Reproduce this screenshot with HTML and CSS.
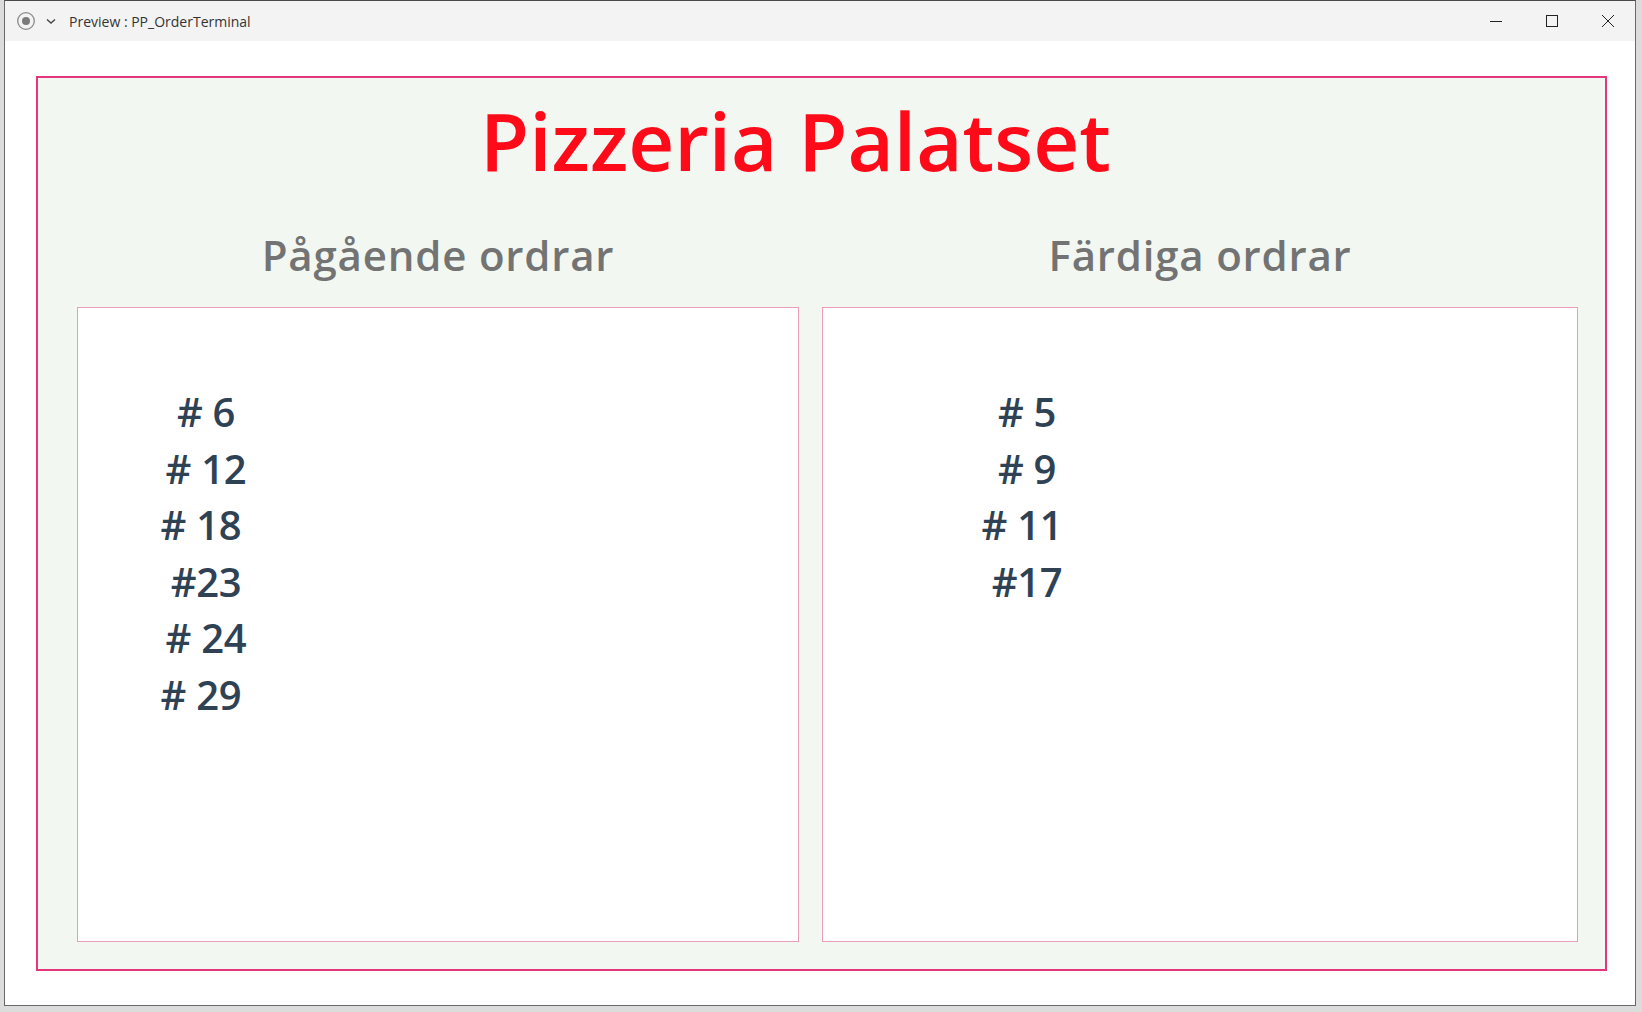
FILE: index.html
```html
<!DOCTYPE html>
<html>
<head>
    <title>Preview : PP_OrderTerminal</title>
    <meta name="viewport" content="width=device-width, initial-scale=1.0">
    <link rel="stylesheet" href="styles.css">
</head>
<body>
    <div class="window">
        <div class="titlebar">
            <svg class="app-icon" width="20" height="20" viewBox="0 0 20 20">
                <circle cx="10" cy="10" r="8.3" fill="none" stroke="#8a8a8a" stroke-width="1.3"/>
                <circle cx="10" cy="10" r="4" fill="#7a7a7a"/>
            </svg>
            <svg class="chevron" width="12" height="12" viewBox="0 0 12 12">
                <path d="M2 4.5 L6 8 L10 4.5" fill="none" stroke="#444" stroke-width="1.4"/>
            </svg>
            <span class="window-title">Preview : PP_OrderTerminal</span>
            <div class="controls">
                <svg width="14" height="14" viewBox="0 0 14 14">
                    <path d="M1 7.5 H13" stroke="#222" stroke-width="1"/>
                </svg>
                <svg width="14" height="14" viewBox="0 0 14 14">
                    <rect x="1.5" y="1.5" width="11" height="11" fill="none" stroke="#222" stroke-width="1"/>
                </svg>
                <svg width="14" height="14" viewBox="0 0 14 14">
                    <path d="M1 1 L13 13 M13 1 L1 13" stroke="#222" stroke-width="1"/>
                </svg>
            </div>
        </div>

        <div class="client">
            <div class="board">
                <h1 class="brand">Pizzeria Palatset</h1>

                <div class="columns">
                    <section class="column">
                        <h2 class="column-title">Pågående ordrar</h2>
                        <div class="order-box">
                            <ul class="orders orders-ongoing">
                                <li># 6</li>
                                <li># 12</li>
                                <li class="nudge-left"># 18</li>
                                <li>#23</li>
                                <li># 24</li>
                                <li class="nudge-left"># 29</li>
                            </ul>
                        </div>
                    </section>

                    <section class="column">
                        <h2 class="column-title">Färdiga ordrar</h2>
                        <div class="order-box">
                            <ul class="orders orders-done">
                                <li># 5</li>
                                <li># 9</li>
                                <li class="nudge-left"># 11</li>
                                <li>#17</li>
                            </ul>
                        </div>
                    </section>
                </div>
            </div>
        </div>
    </div>
</body>
</html>
```

FILE: styles.css
```css
html, body {
    margin: 0;
    padding: 0;
}
body {
    background: #dcdcdc;
    font-family: "Open Sans", "Noto Sans", Arial, sans-serif;
    width: 1642px;
    height: 1012px;
    overflow: hidden;
}
.window {
    margin-left: 4px;
    width: 1632px;
    height: 1006px;
    border: 1px solid #6a6a6a;
    border-top-color: #4a4a4a;
    box-sizing: border-box;
    background: #fff;
    display: flex;
    flex-direction: column;
}
.titlebar {
    height: 40px;
    background: #f3f3f3;
    display: flex;
    align-items: center;
    flex-shrink: 0;
}
.app-icon {
    margin-left: 11px;
}
.chevron {
    margin-left: 9px;
}
.window-title {
    margin-left: 12px;
    font-size: 14px;
    color: #333;
}
.controls {
    margin-left: auto;
    display: flex;
    gap: 42px;
    margin-right: 20px;
}
.client {
    flex: 1;
    padding: 35px 0 0 31px;
}
.board {
    width: 1571px;
    height: 895px;
    box-sizing: border-box;
    border: 2px solid #e3367c;
    background: #f2f7f2;
}
.brand {
    margin: 22px 52px 0 0;
    font-size: 80px;
    line-height: 80px;
    font-weight: 600;
    color: #ff0a19;
    text-align: center;
}
.columns {
    display: grid;
    grid-template-columns: 722px 756px;
    column-gap: 23px;
    margin: 55px 0 0 39px;
}
.column-title {
    margin: 0 0 32px 0;
    font-size: 42px;
    line-height: 40px;
    font-weight: 600;
    letter-spacing: 0.8px;
    color: #737373;
    text-align: center;
}
.order-box {
    height: 635px;
    box-sizing: border-box;
    border: 1px solid #eb9ebb;
    background: #fff;
    padding-top: 76px;
}
.orders {
    list-style: none;
    margin: 0;
    padding: 0;
    width: 110px;
    text-align: center;
    font-size: 40px;
    line-height: 56.5px;
    font-weight: 600;
    letter-spacing: -0.3px;
    color: #2f4254;
}
.orders-ongoing {
    margin-left: 73px;
}
.orders-done {
    margin-left: 149px;
}
.nudge-left {
    margin-right: 10px;
}
```
